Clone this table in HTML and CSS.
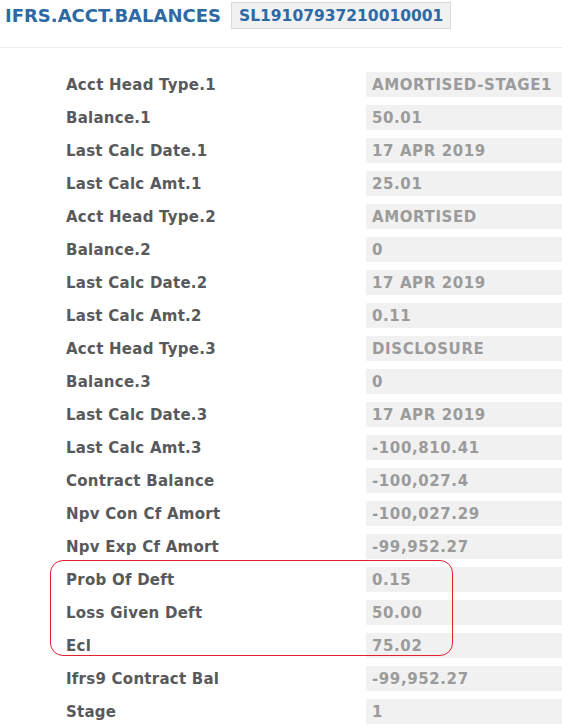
FILE: index.html
```html
<!DOCTYPE html>
<html>
<head>
<meta charset="utf-8">
<link rel="stylesheet" href="styles.css">
</head>
<body>
<header class="header">
  <h1 class="title">IFRS.ACCT.BALANCES</h1>
  <span class="badge">SL19107937210010001</span>
</header>
<div class="list">
  <div class="row"><span class="label">Acct Head Type.1</span><span class="value">AMORTISED-STAGE1</span></div>
  <div class="row"><span class="label">Balance.1</span><span class="value">50.01</span></div>
  <div class="row"><span class="label">Last Calc Date.1</span><span class="value">17 APR 2019</span></div>
  <div class="row"><span class="label">Last Calc Amt.1</span><span class="value">25.01</span></div>
  <div class="row"><span class="label">Acct Head Type.2</span><span class="value">AMORTISED</span></div>
  <div class="row"><span class="label">Balance.2</span><span class="value">0</span></div>
  <div class="row"><span class="label">Last Calc Date.2</span><span class="value">17 APR 2019</span></div>
  <div class="row"><span class="label">Last Calc Amt.2</span><span class="value">0.11</span></div>
  <div class="row"><span class="label">Acct Head Type.3</span><span class="value">DISCLOSURE</span></div>
  <div class="row"><span class="label">Balance.3</span><span class="value">0</span></div>
  <div class="row"><span class="label">Last Calc Date.3</span><span class="value">17 APR 2019</span></div>
  <div class="row"><span class="label">Last Calc Amt.3</span><span class="value">-100,810.41</span></div>
  <div class="row"><span class="label">Contract Balance</span><span class="value">-100,027.4</span></div>
  <div class="row"><span class="label">Npv Con Cf Amort</span><span class="value">-100,027.29</span></div>
  <div class="row"><span class="label">Npv Exp Cf Amort</span><span class="value">-99,952.27</span></div>
  <div class="highlight-group">
    <div class="highlight"></div>
    <div class="row"><span class="label">Prob Of Deft</span><span class="value">0.15</span></div>
    <div class="row"><span class="label">Loss Given Deft</span><span class="value">50.00</span></div>
    <div class="row"><span class="label">Ecl</span><span class="value">75.02</span></div>
  </div>
  <div class="row"><span class="label">Ifrs9 Contract Bal</span><span class="value">-99,952.27</span></div>
  <div class="row"><span class="label">Stage</span><span class="value">1</span></div>
</div>
</body>
</html>
```
FILE: styles.css
```css
html, body {
  margin: 0;
  padding: 0;
  background: #ffffff;
  overflow: hidden;
}
body {
  font-family: "DejaVu Sans", Verdana, sans-serif;
  width: 562px;
  height: 728px;
}
.header {
  display: flex;
  align-items: center;
  gap: 10px;
  padding: 2px 0 0 5px;
  height: 27px;
  border-bottom: 1px solid #ededed;
  padding-bottom: 18px;
}
.title {
  margin: 0;
  font-size: 18px;
  font-weight: bold;
  color: #2d6aa5;
}
.badge {
  display: flex;
  align-items: center;
  box-sizing: border-box;
  height: 27px;
  padding: 0 7px;
  background: #f1f1f1;
  border: 1px solid #d9d9d9;
  font-size: 15.5px;
  font-weight: bold;
  color: #2d6aa5;
}
.list {
  display: flex;
  flex-direction: column;
  gap: 8px;
  padding: 24px 0 0 66px;
}
.row {
  display: grid;
  grid-template-columns: 300px 1fr;
  height: 25px;
  align-items: stretch;
}
.label {
  display: flex;
  align-items: center;
  font-size: 15px;
  letter-spacing: 0.25px;
  font-weight: bold;
  color: #58595b;
}
.value {
  display: flex;
  align-items: center;
  padding-left: 6px;
  background: #f1f1f1;
  font-size: 15px;
  letter-spacing: 0.6px;
  font-weight: bold;
  color: #9b9b9b;
}
.highlight-group {
  position: relative;
  display: flex;
  flex-direction: column;
  gap: 8px;
}
.highlight {
  position: absolute;
  left: -16px;
  top: -7px;
  width: 403px;
  height: 96px;
  box-sizing: border-box;
  border: 1px solid #e3212b;
  border-radius: 13px;
  pointer-events: none;
}
```
